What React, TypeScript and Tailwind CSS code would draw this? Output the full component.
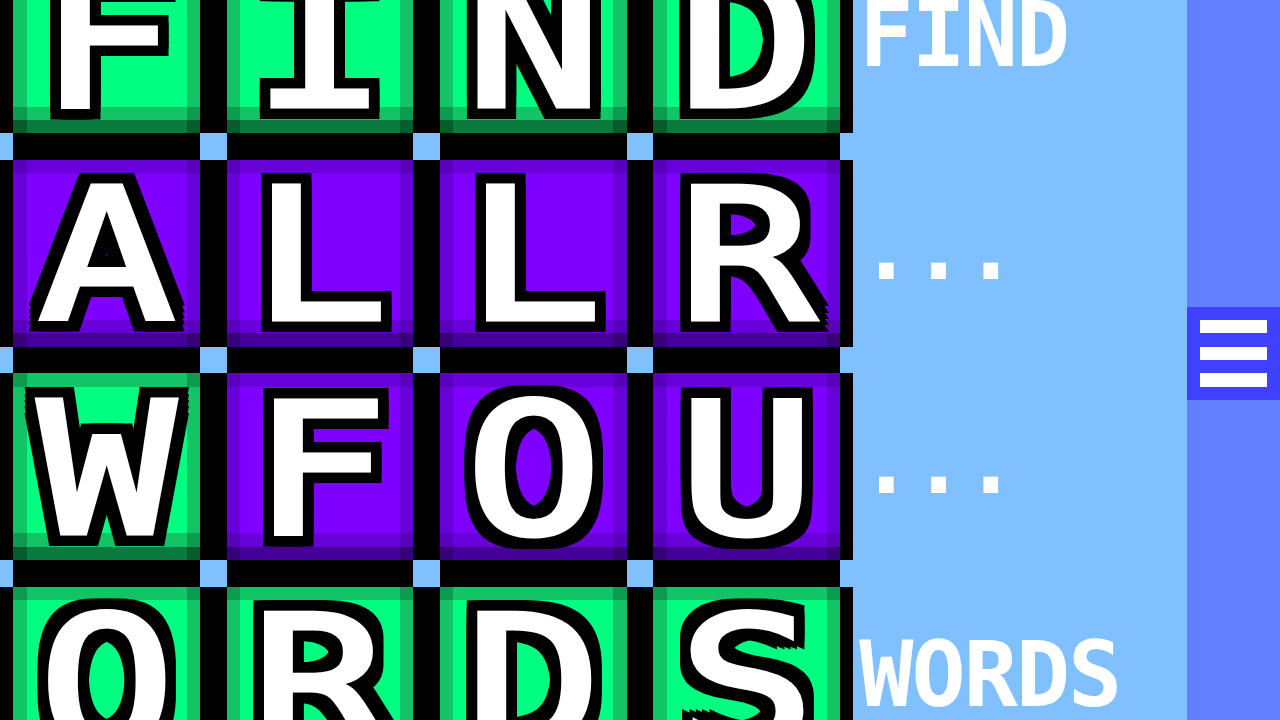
import React from "react";

type Kind = "g" | "p";

const rows: { l: string; k: Kind }[][] = [
  [
    { l: "F", k: "g" },
    { l: "I", k: "g" },
    { l: "N", k: "g" },
    { l: "D", k: "g" },
  ],
  [
    { l: "A", k: "p" },
    { l: "L", k: "p" },
    { l: "L", k: "p" },
    { l: "R", k: "p" },
  ],
  [
    { l: "W", k: "g" },
    { l: "F", k: "p" },
    { l: "O", k: "p" },
    { l: "U", k: "p" },
  ],
  [
    { l: "O", k: "g" },
    { l: "R", k: "g" },
    { l: "D", k: "g" },
    { l: "S", k: "g" },
  ],
];

function Tile({ letter, kind }: { letter: string; kind: Kind }) {
  const g = kind === "g";
  return (
    <div
      className={`relative h-[186.67px] pb-[13.33px] ${g ? "bg-[#0b7a3f]" : "bg-[#46009a]"}`}
    >
      <div className={`h-full p-[13.33px] ${g ? "bg-[#12c466]" : "bg-[#6800da]"}`}>
        <div className={`h-full ${g ? "bg-[#00ff80]" : "bg-[#8000ff]"}`} />
      </div>
      <div className={`absolute left-0 top-0 size-[13.33px] ${g ? "bg-[#0c9c50]" : "bg-[#5800bc]"}`} />
      <div className={`absolute right-0 top-0 size-[13.33px] ${g ? "bg-[#0c9c50]" : "bg-[#5800bc]"}`} />
      <div className={`absolute left-0 bottom-[13.33px] size-[13.33px] ${g ? "bg-[#0c9c50]" : "bg-[#5800bc]"}`} />
      <div className={`absolute right-0 bottom-[13.33px] size-[13.33px] ${g ? "bg-[#0c9c50]" : "bg-[#5800bc]"}`} />
      <div className={`absolute left-0 bottom-0 size-[13.33px] ${g ? "bg-[#075c2e]" : "bg-[#360078]"}`} />
      <div className={`absolute right-0 bottom-0 size-[13.33px] ${g ? "bg-[#075c2e]" : "bg-[#360078]"}`} />
      <div className="absolute inset-0 flex items-center justify-center">
        <span className="block translate-y-[3px] scale-x-[1.25] font-['DejaVu_Sans_Mono',monospace] text-[182px] font-normal leading-none text-white [-webkit-text-stroke:5px_#fff] [text-shadow:11px_0_0_#000,-11px_0_0_#000,0_13px_0_#000,0_-13px_0_#000,11px_13px_0_#000,-11px_13px_0_#000,11px_-13px_0_#000,-11px_-13px_0_#000,11px_6px_0_#000,-11px_6px_0_#000,11px_-6px_0_#000,-11px_-6px_0_#000,5px_13px_0_#000,-5px_13px_0_#000,5px_-13px_0_#000,-5px_-13px_0_#000]">
          {letter}
        </span>
      </div>
    </div>
  );
}

export default function App() {
  return (
    <div className="flex h-[720px] w-[1280px] overflow-hidden bg-black">
      {/* board */}
      <div className="relative h-full w-[853.33px] shrink-0 overflow-hidden bg-black">
        <div className="-mt-[53.33px] ml-[13.33px] grid w-[826.67px] grid-cols-4 gap-[26.67px]">
          {rows.flat().map((t, i) => (
            <Tile key={i} letter={t.l} kind={t.k} />
          ))}
        </div>
        <div className="absolute left-[-13.33px] top-[133.33px] grid w-[880px] grid-cols-[repeat(5,26.67px)] gap-[186.67px]">
          {Array.from({ length: 15 }).map((_, i) => (
            <div key={i} className="size-[26.67px] bg-[#80c0ff]" />
          ))}
        </div>
      </div>

      {/* word panel */}
      <div className="flex h-full w-[333.33px] shrink-0 flex-col bg-[#80c0ff] pl-[6px] font-['DejaVu_Sans_Mono',monospace] text-[90px] font-bold leading-none tracking-[-2px] text-white">
        <div className="h-[213.33px] shrink-0">
          <div className="-translate-y-[10px]">FIND</div>
        </div>
        <div className="h-[213.33px] shrink-0">
          <div className="-translate-y-[10px]">...</div>
        </div>
        <div className="h-[213.33px] shrink-0">
          <div className="-translate-y-[10px]">...</div>
        </div>
        <div className="min-h-0 flex-1">
          <div className="-translate-y-[10px]">WORDS</div>
        </div>
      </div>

      {/* sidebar */}
      <div className="flex h-full w-[93.33px] shrink-0 flex-col bg-[#6080ff]">
        <div className="h-[306.67px] shrink-0" />
        <button className="flex h-[93.33px] shrink-0 flex-col gap-[13.33px] bg-[#4040ff] p-[13.33px]">
          <span className="block h-[13.33px] w-full bg-white" />
          <span className="block h-[13.33px] w-full bg-white" />
          <span className="block h-[13.33px] w-full bg-white" />
        </button>
      </div>
    </div>
  );
}
